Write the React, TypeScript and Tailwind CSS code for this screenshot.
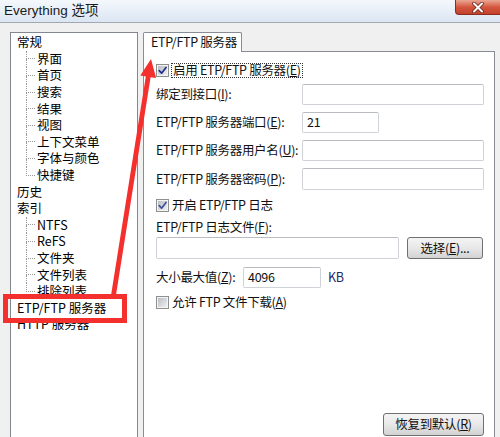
import React from "react";

const FONT = { fontFamily: '"Noto Sans CJK SC", "Liberation Sans", sans-serif' };

function Check({ dark }: { dark?: boolean }) {
  return (
    <svg width="9" height="9" viewBox="0 0 9 9">
      <path
        d="M1.2 4.6 L3.6 7.2 L8 1.4"
        fill="none"
        stroke={dark ? "#1f2f8a" : "#3e5298"}
        strokeWidth="1.7"
        strokeLinecap="round"
        strokeLinejoin="round"
      />
    </svg>
  );
}

function CheckBox({ checked, dark }: { checked?: boolean; dark?: boolean }) {
  return (
    <span className="flex h-[13px] w-[13px] shrink-0 items-center justify-center border border-[#8e8f8f] bg-[#f4f4f4]">
      <span className="flex h-[9px] w-[9px] items-center justify-center bg-gradient-to-br from-[#b9bdc3] to-[#f0f0f1]">
        {checked ? <Check dark={dark} /> : null}
      </span>
    </span>
  );
}

function M({ k }: { k: string }) {
  return (
    <span>
      (<span className="underline">{k}</span>)
    </span>
  );
}

function Input({ w, value }: { w: string; value?: string }) {
  return (
    <div
      className={`${w} flex h-full shrink-0 items-center rounded-[2px] border border-[#cfd2d7] border-t-[#b9bcc1] bg-white pl-[4px] text-[12.5px] text-[#111]`}
    >
      {value}
    </div>
  );
}

function Btn({ children, w }: { children: React.ReactNode; w: string }) {
  return (
    <div
      className={`${w} flex h-full items-center justify-center whitespace-nowrap rounded-[3px] border border-[#707070] bg-gradient-to-b from-[#f4f4f4] via-[#e8e8e8] to-[#d2d2d2] text-[12.5px] text-[#111]`}
    >
      {children}
    </div>
  );
}

function TopItem({ t }: { t: string }) {
  return <div className="flex h-[16.6px] items-center whitespace-nowrap pl-[6px] leading-[16px]">{t}</div>;
}

function ChildItem({ t, last }: { t: string; last?: boolean }) {
  return (
    <div className="flex h-[16.6px] items-stretch">
      <div className="ml-[15px] flex w-[9px] flex-col">
        <div className="flex-1 border-b border-l border-dotted border-[#9a9a9a]" />
        <div className={last ? "flex-1" : "flex-1 border-l border-dotted border-[#9a9a9a]"} />
      </div>
      <span className="flex items-center whitespace-nowrap pl-[2px] leading-[16px]">{t}</span>
    </div>
  );
}

export default function App() {
  const general = ["界面", "首页", "搜索", "结果", "视图", "上下文菜单", "字体与颜色", "快捷键"];
  const index = ["NTFS", "ReFS", "文件夹", "文件列表", "排除列表"];
  return (
    <div className="relative h-[437px] w-[500px] overflow-hidden bg-[#f0f0f0] text-[12.5px] text-[#111]" style={FONT}>
      {/* title bar */}
      <div className="flex h-[23px] border-b border-[#a3a9b1] bg-gradient-to-b from-[#f4f8fc] to-[#dbe6f3]">
        <div
          className="flex items-center pl-[4px] text-[13.5px] text-[#1a1a1a]"
          style={{ fontFamily: '"Liberation Sans", "Noto Sans CJK SC", sans-serif' }}
        >
          Everything 选项
        </div>
        <div className="ml-auto flex h-[15px] w-[45px] items-center justify-center rounded-bl-[4px] border-b border-l border-[#8c2c1e] bg-gradient-to-b from-[#e9a795] via-[#d4563f] to-[#c3412b]">
          <svg width="14" height="11" viewBox="0 0 14 11">
            <path d="M3 1.5 L11 9.5 M11 1.5 L3 9.5" stroke="#6a2318" strokeWidth="3.6" strokeLinecap="round" />
            <path d="M3 1.5 L11 9.5 M11 1.5 L3 9.5" stroke="#ffffff" strokeWidth="2" strokeLinecap="round" />
          </svg>
        </div>
      </div>

      {/* body */}
      <div className="flex pl-[10px] pt-[9px]">
        {/* tree */}
        <div className="h-[430px] w-[128px] shrink-0 border border-[#828790] bg-white pt-[1px] text-[#000]">
          <TopItem t="常规" />
          {general.map((t, i) => (
            <ChildItem key={t} t={t} last={i === general.length - 1} />
          ))}
          <TopItem t="历史" />
          <TopItem t="索引" />
          {index.map((t, i) => (
            <ChildItem key={t} t={t} last={i === index.length - 1} />
          ))}
          <TopItem t="ETP/FTP 服务器" />
          <TopItem t="HTTP 服务器" />
        </div>

        {/* right side */}
        <div className="ml-[5px] flex w-[352px] shrink-0 flex-col tracking-[-0.3px]">
          <div className="relative z-10 flex h-[20px] w-[99px] items-center whitespace-nowrap rounded-t-[2px] border-l border-r border-t border-[#898c95] bg-white pl-[7px]">
            ETP/FTP 服务器
          </div>
          <div className="-mt-px h-[420px] border border-[#898c95] bg-white pl-[12px] pt-[10px]">
            {/* enable */}
            <div className="flex h-[16px] items-center whitespace-nowrap">
              <CheckBox checked dark />
              <span className="ml-[2px] flex h-[15px] items-center border border-dotted border-[#333] px-[1px]">
                启用 ETP/FTP 服务器<M k="E" />
              </span>
            </div>

            <div className="mt-[6px] flex h-[21px] items-center whitespace-nowrap">
              <span className="w-[146px] shrink-0">
                绑定到接口<M k="I" />:
              </span>
              <Input w="w-[182px]" />
            </div>
            <div className="mt-[7px] flex h-[21px] items-center whitespace-nowrap">
              <span className="w-[146px] shrink-0">
                ETP/FTP 服务器端口<M k="E" />:
              </span>
              <Input w="w-[77px]" value="21" />
            </div>
            <div className="mt-[7px] flex h-[21px] items-center whitespace-nowrap">
              <span className="w-[146px] shrink-0">
                ETP/FTP 服务器用户名<M k="U" />:
              </span>
              <Input w="w-[182px]" />
            </div>
            <div className="mt-[7px] flex h-[22px] items-center whitespace-nowrap">
              <span className="w-[146px] shrink-0">
                ETP/FTP 服务器密码<M k="P" />:
              </span>
              <Input w="w-[182px]" />
            </div>

            <div className="mt-[7px] flex h-[16px] items-center whitespace-nowrap">
              <CheckBox checked />
              <span className="ml-[3px]">开启 ETP/FTP 日志</span>
            </div>
            <div className="mt-[6px] flex h-[16px] items-center whitespace-nowrap">
              ETP/FTP 日志文件<M k="F" />:
            </div>
            <div className="mt-[2px] flex h-[22px]">
              <Input w="w-[243px]" />
              <div className="ml-[8px] h-full">
                <Btn w="w-[76px]">
                  选择<M k="E" />...
                </Btn>
              </div>
            </div>
            <div className="mt-[8px] flex h-[21px] items-center whitespace-nowrap">
              <span className="w-[87px] shrink-0">
                大小最大值<M k="Z" />:
              </span>
              <Input w="w-[78px]" value="4096" />
              <span className="ml-[7px] text-[#1f2a6a]">KB</span>
            </div>
            <div className="mt-[6px] flex h-[16px] items-center whitespace-nowrap">
              <CheckBox />
              <span className="ml-[3px]">
                允许 FTP 文件下载<M k="A" />
              </span>
            </div>

            <div className="mt-[103px] flex h-[23px] justify-end pr-[10px]">
              <Btn w="w-[101px]">
                恢复到默认<M k="R" />
              </Btn>
            </div>
          </div>
        </div>
      </div>

      {/* annotation: red box */}
      <div className="absolute left-[3px] top-[294px] h-[29px] w-[124px] border-[5px] border-[#f4302f]" />
      {/* annotation: red arrow */}
      <svg className="pointer-events-none absolute left-0 top-0" width="500" height="437" viewBox="0 0 500 437">
        <polygon
          points="151,59 140.3,75.6 145.8,76.4 110.6,298 115.4,298.8 150.6,77.2 156.1,78"
          fill="#f4302f"
        />
      </svg>
    </div>
  );
}
